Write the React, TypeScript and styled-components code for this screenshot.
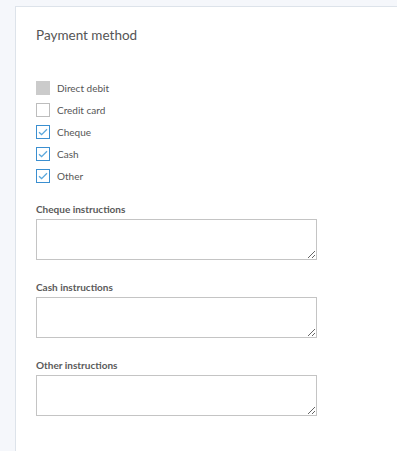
import React from 'react';
import styled, { createGlobalStyle } from 'styled-components';

const GlobalStyle = createGlobalStyle`
  html, body {
    margin: 0;
    padding: 0;
    background: #f5f7fb;
    font-family: Lato, "Open Sans", "Liberation Sans", sans-serif;
  }
`;

type Option = { label: string; checked: boolean; disabled?: boolean };

const options: Option[] = [
  { label: 'Direct debit', checked: false, disabled: true },
  { label: 'Credit card', checked: false },
  { label: 'Cheque', checked: true },
  { label: 'Cash', checked: true },
  { label: 'Other', checked: true },
];

const instructions = ['Cheque instructions', 'Cash instructions', 'Other instructions'];

const Page = styled.div`
  padding: 6px 0 0 15px;
  height: 445px;
  overflow: hidden;
  display: flex;
`;

const Panel = styled.section`
  flex: 1;
  background: #fff;
  border-top: 1px solid #dde3ea;
  border-left: 1px solid #dde3ea;
  padding: 19px 20px 20px 20px;
`;

const Title = styled.h2`
  margin: 0 0 37px 0;
  font-size: 13.5px;
  font-weight: 400;
  color: #555;
  line-height: 18px;
`;

const OptionList = styled.div`
  display: flex;
  flex-direction: column;
  gap: 8px;
  margin-bottom: 19px;
`;

const OptionRow = styled.label`
  display: flex;
  align-items: center;
  gap: 7px;
  font-size: 10px;
  color: #555;
  height: 14px;
`;

const Box = styled.span<{ $checked: boolean; $disabled?: boolean }>`
  width: 14px;
  height: 14px;
  box-sizing: border-box;
  border: 1px solid ${(p) => (p.$disabled ? '#cbcbcb' : p.$checked ? '#3b8fd0' : '#bdbdbd')};
  background: ${(p) => (p.$disabled ? '#cbcbcb' : '#fff')};
  display: flex;
  align-items: center;
  justify-content: center;
`;

const Field = styled.div`
  display: flex;
  flex-direction: column;
  gap: 3px;
  margin-bottom: 20px;
`;

const FieldLabel = styled.span`
  font-size: 10px;
  font-weight: 700;
  color: #5a5a5a;
  line-height: 14px;
`;

const Textarea = styled.textarea`
  width: 281px;
  height: 41px;
  box-sizing: border-box;
  border: 1px solid #c4c4c4;
  border-radius: 0;
  margin: 0;
  padding: 4px;
  font-family: inherit;
  display: block;
`;

const Check = () => (
  <svg width="10" height="8" viewBox="0 0 10 8">
    <path d="M1 4.2 L3.6 6.6 L9 1.2" fill="none" stroke="#5aa7dc" strokeWidth="1.3" />
  </svg>
);

export default function App() {
  return (
    <>
      <GlobalStyle />
      <Page>
        <Panel>
          <Title>Payment method</Title>
          <OptionList>
            {options.map((o) => (
              <OptionRow key={o.label}>
                <Box $checked={o.checked} $disabled={o.disabled}>
                  {o.checked && <Check />}
                </Box>
                {o.label}
              </OptionRow>
            ))}
          </OptionList>
          {instructions.map((t) => (
            <Field key={t}>
              <FieldLabel>{t}</FieldLabel>
              <Textarea />
            </Field>
          ))}
        </Panel>
      </Page>
    </>
  );
}
